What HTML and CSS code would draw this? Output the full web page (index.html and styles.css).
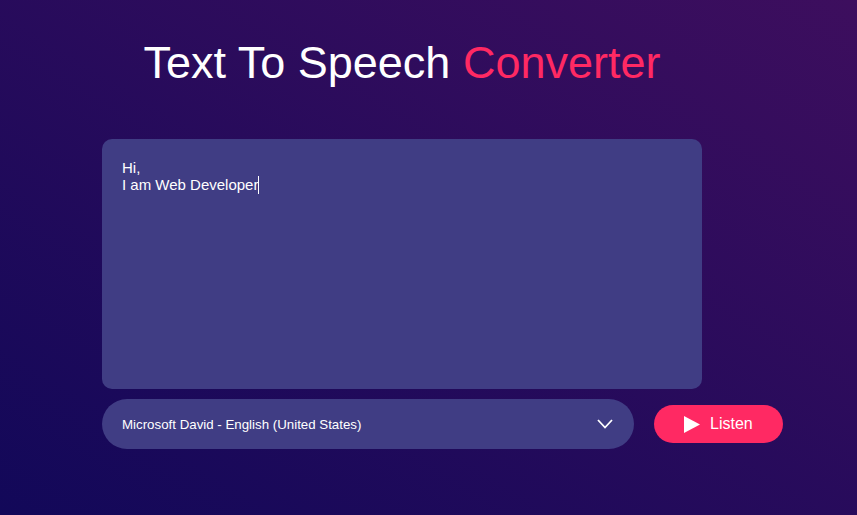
FILE: index.html
```html
<!DOCTYPE html>
<html lang="en">
<head>
<meta charset="utf-8">
<title>Text To Speech Converter</title>
<link rel="stylesheet" href="styles.css">
</head>
<body>
<main class="hero">
  <h1 class="title">Text To Speech <span class="accent">Converter</span></h1>
  <div class="text-box">Hi,<br>I am Web Developer<span class="caret"></span></div>
  <div class="row">
    <div class="voice-select">
      <span class="voice-name">Microsoft David - English (United States)</span>
      <svg class="chevron" width="16" height="10" viewBox="0 0 16 10"><path d="M1 1 L8 8.5 L15 1" fill="none" stroke="#fff" stroke-width="1.8"/></svg>
    </div>
    <button class="listen"><svg class="play" width="16" height="17" viewBox="0 0 16 17"><path d="M0 0 L16 8.5 L0 17 Z" fill="#fff"/></svg>Listen</button>
  </div>
</main>
</body>
</html>
```
FILE: styles.css
```css
html, body {
  margin: 0;
  height: 100%;
}
body {
  background: linear-gradient(to right top, #120859, #3d0e5e);
  font-family: "Liberation Sans", Arial, sans-serif;
  color: #fff;
  overflow: hidden;
}
.hero {
  display: flex;
  flex-direction: column;
  align-items: flex-start;
  padding: 37px 0 0 102px;
}
.title {
  width: 600px;
  margin: 0;
  text-align: center;
  font-size: 45px;
  font-weight: 400;
  line-height: 51px;
}
.accent {
  color: #ff2963;
}
.text-box {
  box-sizing: border-box;
  width: 600px;
  height: 250px;
  margin-top: 51px;
  padding: 20px;
  background: #403d84;
  border-radius: 10px;
  font-size: 15px;
  line-height: 17px;
}
.caret {
  display: inline-block;
  width: 1px;
  height: 18px;
  background: #fff;
  vertical-align: -4px;
}
.row {
  display: flex;
  align-items: center;
  gap: 20px;
  margin-top: 10px;
}
.voice-select {
  box-sizing: border-box;
  width: 532px;
  height: 50px;
  display: flex;
  align-items: center;
  justify-content: space-between;
  padding: 0 20px;
  background: #403d84;
  border-radius: 25px;
  font-size: 13.3px;
}
.chevron {
  margin-right: 1px;
}
.listen {
  display: flex;
  align-items: center;
  gap: 10px;
  width: 129px;
  height: 38px;
  padding: 0 0 0 30px;
  border: none;
  border-radius: 19px;
  background: #ff2963;
  color: #fff;
  font-family: "Liberation Sans", Arial, sans-serif;
  font-size: 16px;
}
```
